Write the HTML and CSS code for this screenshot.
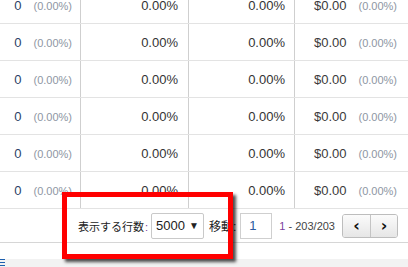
FILE: index.html
```html
<!DOCTYPE html>
<html lang="ja">
<head>
    <meta charset="UTF-8">
    <title>レポート</title>
    <link rel="stylesheet" href="styles.css">
</head>
<body>
    <div class="report">
        <table class="grid">
            <tr>
                <td class="c1"><span class="num">0</span><span class="pct">(0.00%)</span></td>
                <td class="c2">0.00%</td>
                <td class="c3">0.00%</td>
                <td class="c4"><span class="money">$0.00</span><span class="pct">(0.00%)</span></td>
            </tr>
            <tr>
                <td class="c1"><span class="num">0</span><span class="pct">(0.00%)</span></td>
                <td class="c2">0.00%</td>
                <td class="c3">0.00%</td>
                <td class="c4"><span class="money">$0.00</span><span class="pct">(0.00%)</span></td>
            </tr>
            <tr>
                <td class="c1"><span class="num">0</span><span class="pct">(0.00%)</span></td>
                <td class="c2">0.00%</td>
                <td class="c3">0.00%</td>
                <td class="c4"><span class="money">$0.00</span><span class="pct">(0.00%)</span></td>
            </tr>
            <tr>
                <td class="c1"><span class="num">0</span><span class="pct">(0.00%)</span></td>
                <td class="c2">0.00%</td>
                <td class="c3">0.00%</td>
                <td class="c4"><span class="money">$0.00</span><span class="pct">(0.00%)</span></td>
            </tr>
            <tr>
                <td class="c1"><span class="num">0</span><span class="pct">(0.00%)</span></td>
                <td class="c2">0.00%</td>
                <td class="c3">0.00%</td>
                <td class="c4"><span class="money">$0.00</span><span class="pct">(0.00%)</span></td>
            </tr>
            <tr>
                <td class="c1"><span class="num">0</span><span class="pct">(0.00%)</span></td>
                <td class="c2">0.00%</td>
                <td class="c3">0.00%</td>
                <td class="c4"><span class="money">$0.00</span><span class="pct">(0.00%)</span></td>
            </tr>
        </table>

        <div class="pager">
            <span class="label">表示する行数<span class="colon">:</span></span>
            <div class="rows-select"><span>5000</span><span class="arrow">▼</span></div>
            <span class="label goto">移動:</span>
            <div class="page-input">1</div>
            <span class="range"><span class="first">1</span> - 203/203</span>
            <div class="nav">
                <button class="nav-btn">&#8249;</button>
                <button class="nav-btn">&#8250;</button>
            </div>
        </div>

        <div class="footer">
            <span class="menu-icon"></span>
        </div>

        <div class="highlight"></div>
    </div>
</body>
</html>
```

FILE: styles.css
```css
body {
    margin: 0;
    font-family: "Liberation Sans", Arial, "Noto Sans CJK JP", sans-serif;
    background-color: #ffffff;
    color: #333;
    overflow: hidden;
}

.report {
    position: relative;
    width: 408px;
    margin-top: -13px;
}

.grid {
    width: 408px;
    border-collapse: collapse;
    table-layout: fixed;
}

.grid td {
    height: 36px;
    padding: 0;
    border-bottom: 1px solid #e3e3e3;
    font-size: 13px;
    text-align: right;
    vertical-align: middle;
}

.grid .c1 {
    width: 72px;
    padding-right: 8px;
    border-right: 1px solid #cfcfcf;
}

.grid .c2 {
    width: 97px;
    padding-right: 10px;
    border-right: 1px solid #cfcfcf;
}

.grid .c3 {
    width: 96px;
    padding-right: 9px;
    border-right: 1px solid #cfcfcf;
}

.grid .c4 {
    padding-right: 11px;
}

.num {
    color: #2b3f66;
}

.pct {
    margin-left: 12px;
    font-size: 11px;
    color: #8e96a3;
}

.money {
    color: #3a3a3a;
}

.pager {
    display: flex;
    align-items: center;
    justify-content: flex-end;
    height: 33px;
    padding-right: 10px;
    border-bottom: 1px solid #d6d6d6;
    font-size: 12px;
}

.label {
    font-size: 11px;
    color: #222;
}

.colon {
    color: #7a3f9d;
    margin-left: 1px;
}

.rows-select {
    display: flex;
    align-items: center;
    justify-content: space-between;
    width: 43px;
    height: 24px;
    margin: 0 5px 0 3px;
    padding: 0 4px;
    border: 1px solid #c9c9c9;
    border-radius: 2px;
    font-size: 13px;
    color: #222;
}

.arrow {
    font-size: 10px;
}

.goto {
    font-size: 12px;
}

.page-input {
    width: 22px;
    height: 24px;
    line-height: 24px;
    margin: 0 7px 0 4px;
    padding-left: 8px;
    border: 1px solid #cfcfcf;
    font-size: 13px;
    color: #2b5aa0;
}

.range {
    font-size: 11px;
    color: #444;
    margin-right: 7px;
}

.first {
    color: #7a3f9d;
}

.nav {
    display: flex;
    border: 1px solid #bdbdbd;
    border-radius: 3px;
    overflow: hidden;
}

.nav-btn {
    width: 27px;
    height: 22px;
    padding: 0;
    border: none;
    background: linear-gradient(#fbfbfb, #e6e6e6);
    font-family: "DejaVu Sans", sans-serif;
    font-size: 16px;
    font-weight: bold;
    line-height: 20px;
    color: #111;
}

.nav-btn + .nav-btn {
    border-left: 1px solid #c4c4c4;
}

.footer {
    height: 40px;
    background-color: #f2f2f2;
}

.menu-icon {
    display: block;
    width: 5px;
    height: 5px;
    margin-top: 16px;
    border-top: 1px solid #1d5fae;
    border-bottom: 1px solid #1d5fae;
    background: linear-gradient(#f2f2f2 2px, #1d5fae 2px, #1d5fae 3px, #f2f2f2 3px);
}

.highlight {
    position: absolute;
    left: 62px;
    top: 205px;
    width: 161px;
    height: 57px;
    border: 5px solid #ff0000;
    box-shadow: 3px 3px 3px rgba(0, 0, 0, 0.7);
}
```
